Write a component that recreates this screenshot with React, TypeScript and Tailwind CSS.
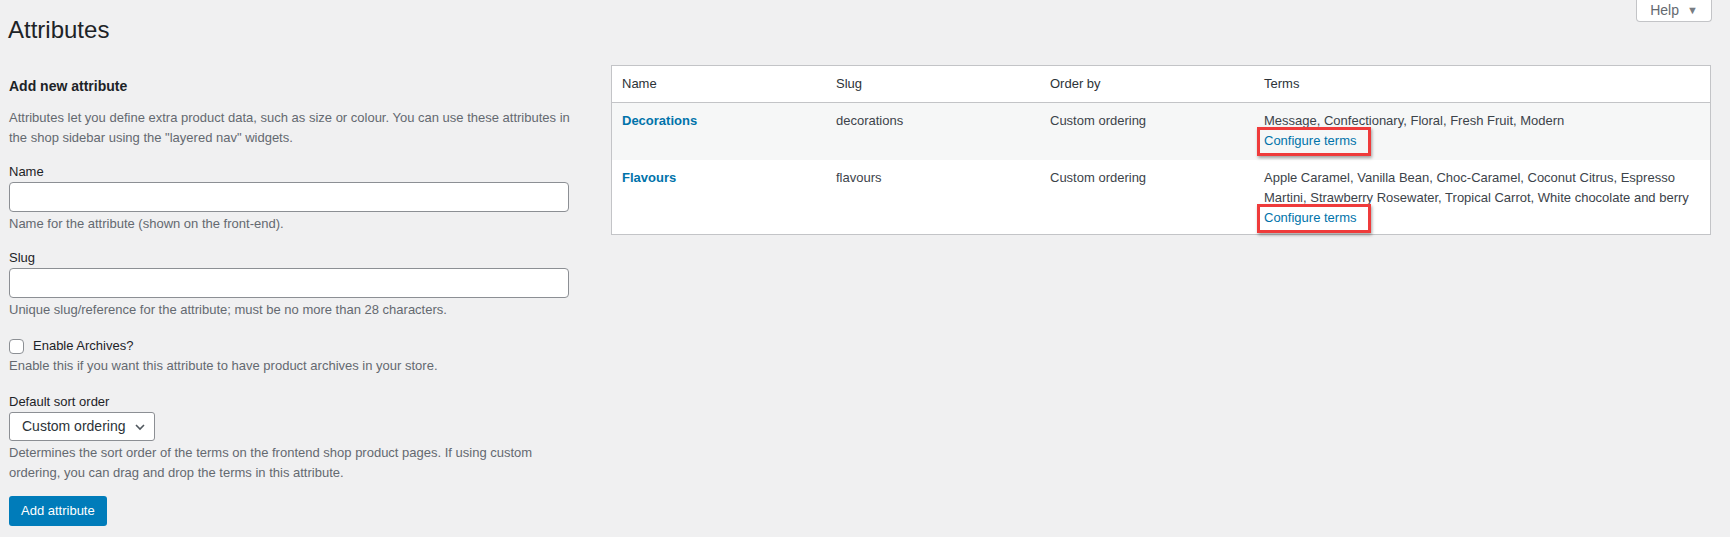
import React from "react";

const font = "font-['Liberation_Sans',Arial,sans-serif]";

const Field = ({ label, help }: { label: string; help: string }) => (
  <div className="flex flex-col">
    <label className="text-[13px] leading-5 text-[#1d2327]">{label}</label>
    <input
      type="text"
      className="w-[560px] h-[30px] bg-white border border-[#8c8f94] rounded-[4px] px-2 outline-none"
    />
    <p className="mt-[2px] text-[13px] leading-5 text-[#646970]">{help}</p>
  </div>
);

const ConfigureLink = () => (
  <span className="relative inline-block">
    <a className="text-[#0073aa] cursor-pointer">Configure terms</a>
    <span className="absolute -left-[7px] -right-[15px] -top-[4px] -bottom-[5px] border-[3px] border-[#ef3b3b] shadow-[1px_2px_3px_rgba(0,0,0,0.35)]" />
  </span>
);

const rows = [
  {
    name: "Decorations",
    slug: "decorations",
    order: "Custom ordering",
    terms: "Message, Confectionary, Floral, Fresh Fruit, Modern",
    striped: true,
    pad: "pt-2 pb-[9px]",
  },
  {
    name: "Flavours",
    slug: "flavours",
    order: "Custom ordering",
    terms:
      "Apple Caramel, Vanilla Bean, Choc-Caramel, Coconut Citrus, Espresso Martini, Strawberry Rosewater, Tropical Carrot, White chocolate and berry",
    striped: false,
    pad: "pt-2 pb-[6px]",
  },
];

const App = () => {
  return (
    <div className={`w-[1730px] h-[537px] bg-[#f0f0f1] ${font} text-[13px] text-[#3c434a] overflow-hidden`}>
      <div className="flex justify-between">
        <h1 className="pl-[8px] pt-[15px] text-[24px] leading-[30px] text-[#1d2327] font-normal">Attributes</h1>
        <button className="mr-[18px] h-[22px] w-[76px] bg-white border border-t-0 border-[#c3c4c7] rounded-b-[4px] text-[14px] text-[#646970] flex items-center justify-center gap-[8px]">
          Help <span className="text-[11px] text-[#787c82]">▼</span>
        </button>
      </div>

      <div className="flex gap-[12px] pl-[9px]">
        {/* left column: add form */}
        <div className="w-[590px] flex flex-col pt-[31px]">
          <h2 className="text-[14px] leading-5 font-semibold text-[#1d2327]">Add new attribute</h2>
          <p className="mt-3 w-[576px] leading-5 text-[#646970]">
            Attributes let you define extra product data, such as size or colour. You can use these attributes in the shop sidebar using the "layered nav" widgets.
          </p>

          <div className="mt-[14px] flex flex-col gap-[14px]">
            <Field label="Name" help="Name for the attribute (shown on the front-end)." />
            <Field
              label="Slug"
              help="Unique slug/reference for the attribute; must be no more than 28 characters."
            />
          </div>

          <div className="mt-4 flex items-center gap-[9px] h-5">
            <span className="w-[15px] h-[15px] bg-white border border-[#8c8f94] rounded-[4px]" />
            <span className="text-[#1d2327]">Enable Archives?</span>
          </div>
          <p className="leading-5 text-[#646970]">
            Enable this if you want this attribute to have product archives in your store.
          </p>

          <label className="mt-4 leading-5 text-[#1d2327]">Default sort order</label>
          <div className="w-[146px] h-[29px] bg-white border border-[#8c8f94] rounded-[3px] flex items-center justify-between pl-[12px] pr-[8px]">
            <span className="text-[14px] text-[#2c3338]">Custom ordering</span>
            <svg width="12" height="12" viewBox="0 0 12 12" fill="none">
              <path d="M2 4l4 4 4-4" stroke="#50575e" strokeWidth="1.6" />
            </svg>
          </div>
          <p className="mt-[2px] leading-5 text-[#646970] w-[570px]">
            Determines the sort order of the terms on the frontend shop product pages. If using custom ordering, you can drag and drop the terms in this attribute.
          </p>

          <button className="mt-[13px] self-start h-[30px] px-[12px] bg-[#007cba] text-white text-[13px] rounded-[3px]">
            Add attribute
          </button>
        </div>

        {/* right column: table */}
        <div className="pt-[20px]">
          <div className="w-[1100px] bg-white border border-[#c3c4c7]">
            <div className="grid grid-cols-[214px_214px_214px_1fr] border-b border-[#c3c4c7] text-[#2c3338]">
              {["Name", "Slug", "Order by", "Terms"].map((h) => (
                <div key={h} className="px-[10px] py-2 leading-5">
                  {h}
                </div>
              ))}
            </div>
            {rows.map((r) => (
              <div
                key={r.name}
                className={`grid grid-cols-[214px_214px_214px_1fr] leading-5 ${r.striped ? "bg-[#f6f7f7]" : "bg-white"}`}
              >
                <div className={`px-[10px] ${r.pad}`}>
                  <a className="font-semibold text-[#0073aa] cursor-pointer">{r.name}</a>
                </div>
                <div className={`px-[10px] ${r.pad}`}>{r.slug}</div>
                <div className={`px-[10px] ${r.pad}`}>{r.order}</div>
                <div className={`px-[10px] pr-[12px] ${r.pad}`}>
                  <div>{r.terms}</div>
                  <ConfigureLink />
                </div>
              </div>
            ))}
          </div>
        </div>
      </div>
    </div>
  );
};

export default App;
